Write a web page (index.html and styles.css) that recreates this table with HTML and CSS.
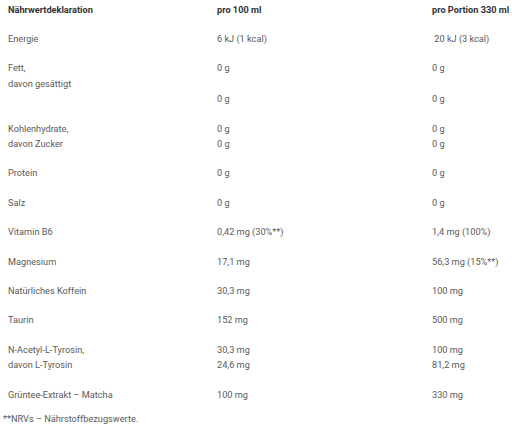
FILE: index.html
```html
<!DOCTYPE html>
<html lang="de">
<head>
<meta charset="utf-8">
<link rel="stylesheet" href="styles.css">
</head>
<body>
<div class="nutri" role="table">
  <div class="row head" role="row"><div class="cell">Nährwertdeklaration</div><div class="cell">pro 100 ml</div><div class="cell">pro Portion 330 ml</div></div>
  <div class="row" role="row"><div class="cell">Energie</div><div class="cell">6 kJ (1 kcal)</div><div class="cell">&nbsp;20 kJ (3 kcal)</div></div>
  <div class="row" role="row"><div class="cell">Fett,<br>davon gesättigt</div><div class="cell">0 g<br><br>0 g</div><div class="cell">0 g<br><br>0 g</div></div>
  <div class="row" role="row"><div class="cell">Kohlenhydrate,<br>davon Zucker</div><div class="cell">0 g<br>0 g</div><div class="cell">0 g<br>0 g</div></div>
  <div class="row" role="row"><div class="cell">Protein</div><div class="cell">0 g</div><div class="cell">0 g</div></div>
  <div class="row" role="row"><div class="cell">Salz</div><div class="cell">0 g</div><div class="cell">0 g</div></div>
  <div class="row" role="row"><div class="cell">Vitamin B6</div><div class="cell">0,42 mg (30%**)</div><div class="cell">1,4 mg (100%)</div></div>
  <div class="row" role="row"><div class="cell">Magnesium</div><div class="cell">17,1 mg</div><div class="cell">56,3 mg (15%**)</div></div>
  <div class="row" role="row"><div class="cell">Natürliches Koffein</div><div class="cell">30,3 mg</div><div class="cell">100 mg</div></div>
  <div class="row" role="row"><div class="cell">Taurin</div><div class="cell">152 mg</div><div class="cell">500 mg</div></div>
  <div class="row" role="row"><div class="cell">N-Acetyl-L-Tyrosin,<br>davon L-Tyrosin</div><div class="cell">30,3 mg<br>24,6 mg</div><div class="cell">100 mg<br>81,2 mg</div></div>
  <div class="row" role="row"><div class="cell">Grüntee-Extrakt – Matcha</div><div class="cell">100 mg</div><div class="cell">330 mg</div></div>
</div>
<p class="note">**NRVs – Nährstoffbezugswerte.</p>
</body>
</html>
```
FILE: styles.css
```css
html, body {
  margin: 0;
  padding: 0;
  background: #fff;
}
body {
  font-family: Roboto, "Liberation Sans", sans-serif;
  font-size: 9.2px;
  line-height: 15.4px;
  color: #5a5a5a;
}
.nutri {
  width: 512px;
}
.row {
  display: grid;
  grid-template-columns: 209px 215px 1fr;
}
.cell {
  padding: 7px 0 7px 8px;
  white-space: nowrap;
}
.head .cell {
  padding-top: 2px;
  padding-bottom: 6.5px;
  color: #333;
  font-weight: 700;
}
.note {
  margin: 2px 0 0 3px;
}
```
